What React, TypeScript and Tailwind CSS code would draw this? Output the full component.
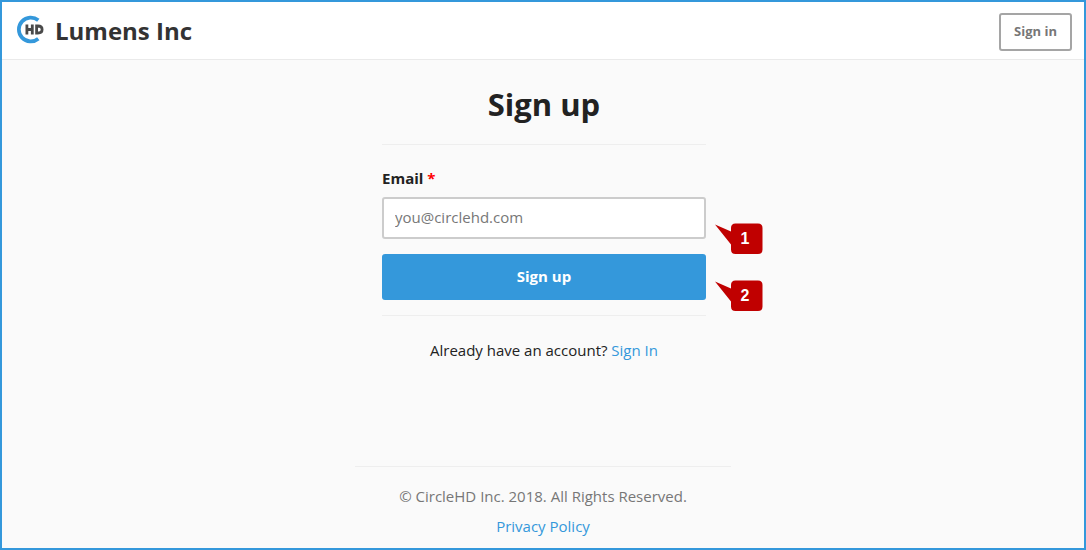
function Callout({ n }: { n: number }) {
  return (
    <svg className="absolute top-[26px] left-full ml-2 h-8 w-[50px]" viewBox="0 0 50 32" role="img" aria-label={`Step ${n}`}>
      <path d="M1 1.5 L17 8.5 V5 Q17 0.5 21.5 0.5 H44 Q48.5 0.5 48.5 5 V26.5 Q48.5 31 44 31 H21.5 Q17 31 17 26.5 V21.5 Z" fill="#c00000" />
      <text x="31" y="21" textAnchor="middle" fill="#fff" className="font-['Liberation_Sans',sans-serif] text-base font-bold">{n}</text>
    </svg>
  );
}

function Logo() {
  return (
    <svg className="h-8 w-7" viewBox="0 0 28 32" role="img" aria-label="CircleHD">
      <path d="M22.3 5.3 A11.9 11.9 0 1 0 22.3 23.7" fill="none" stroke="#3498db" strokeWidth="3.7" />
      <path d="M10.9 9.6v9.8M16.3 9.6v9.8M10.9 14.5h5.4" fill="none" stroke="#4a4a4a" strokeWidth="2.8" />
      <path d="M20.6 11h1.3c2.7 0 4.2 1.2 4.2 3.5s-1.5 3.5-4.2 3.5h-1.3z" fill="none" stroke="#4a4a4a" strokeWidth="2.8" />
    </svg>
  );
}

export default function App() {
  return (
    <div className="flex min-h-screen flex-col border-2 border-[#3498db] bg-[#fafafa] font-['Open_Sans',sans-serif] text-[15px] text-[#222]">
      <header className="flex h-[58px] items-center justify-between border-b border-[#eaeaea] bg-white pr-3 pl-[14px]">
        <div className="flex items-center gap-[11px]">
          <Logo />
          <span className="text-2xl font-bold text-[#333]">Lumens Inc</span>
        </div>
        <button className="mt-0.5 h-[38px] rounded-[3px] border-2 border-[#a5a5a5] px-[13px] text-[13px] font-bold text-[#777]">Sign in</button>
      </header>
      <main className="mx-auto flex w-[326px] max-w-full grow flex-col pt-[23px] pl-0.5">
        <h1 className="text-center text-[31px] leading-[42px] font-bold">Sign up</h1>
        <hr className="mt-[19px] border-[#eee]" />
        <label htmlFor="email" className="mt-[19px] leading-7 font-bold">Email <span className="text-[#ff0000]">*</span></label>
        <div className="relative mt-[5px]">
          <input id="email" type="email" placeholder="you@circlehd.com" className="h-[42px] w-full rounded-[3px] border-2 border-[#ccc] bg-white px-[11px] pb-0.5 placeholder:text-[#777]" />
          <Callout n={1} />
        </div>
        <div className="relative mt-[15px]">
          <button className="h-[46px] w-full rounded-[3px] bg-[#3498db] pb-0.5 font-bold text-white">Sign up</button>
          <Callout n={2} />
        </div>
        <hr className="mt-[15px] border-[#eee]" />
        <p className="mt-5 text-center leading-7">Already have an account? <a href="#" className="text-[#3498db]">Sign In</a></p>
      </main>
      <footer className="mx-auto w-[376px] max-w-full border-t border-[#eee] pt-[14px] pb-[7px] text-center leading-[30px] text-[#777]">
        <p>© CircleHD Inc. 2018. All Rights Reserved.</p>
        <a href="#" className="text-[#3498db]">Privacy Policy</a>
      </footer>
    </div>
  );
}
